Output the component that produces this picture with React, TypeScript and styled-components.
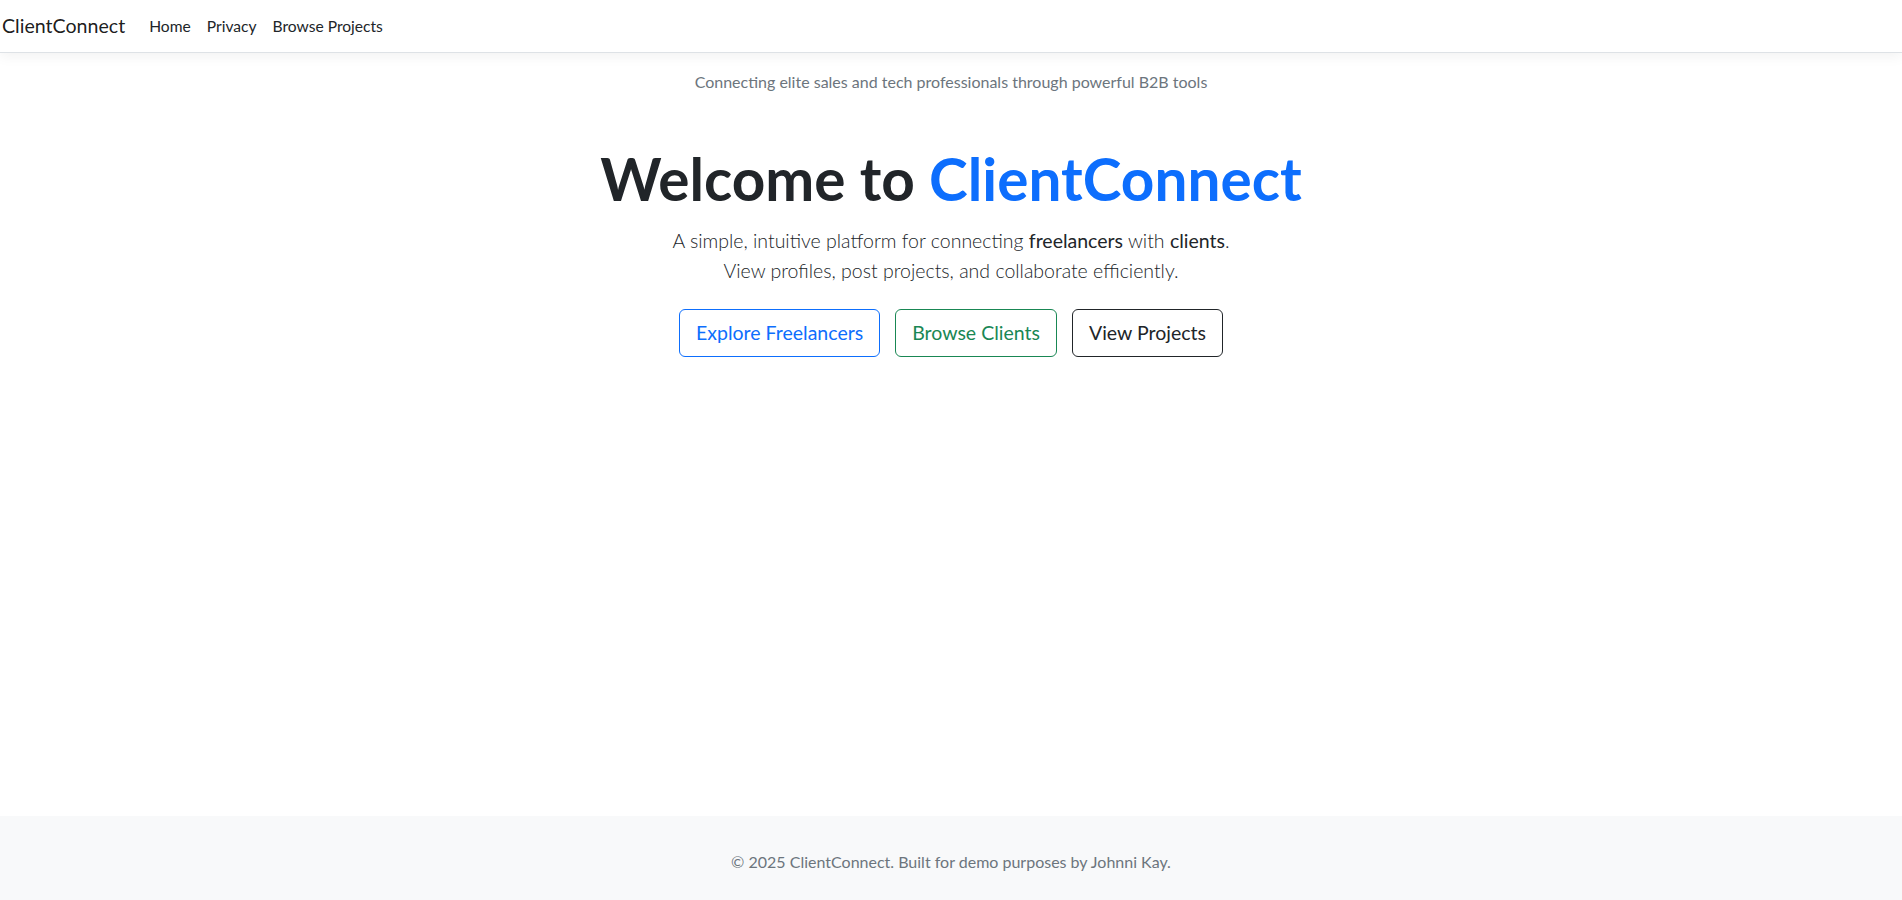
import React from "react";
import styled, { createGlobalStyle } from "styled-components";

const Global = createGlobalStyle`
  * { box-sizing: border-box; }
  html, body { margin: 0; padding: 0; }
  body {
    font-family: "Segoe UI", Lato, "Open Sans", sans-serif;
    font-size: 16px;
    line-height: 1.5;
    color: #212529;
    background: #fff;
  }
`;

const Page = styled.div`
  min-height: 100vh;
  display: flex;
  flex-direction: column;
`;

const Header = styled.header`
  height: 53px;
  display: flex;
  align-items: center;
  padding: 0 2px;
  background: #fff;
  border-bottom: 1px solid #dee2e6;
  box-shadow: 0 0.25rem 0.75rem rgba(0, 0, 0, 0.05);
`;

const Brand = styled.a`
  font-size: 19.6px;
  line-height: 30px;
  color: rgba(0, 0, 0, 0.9);
  margin-right: 16px;
  text-decoration: none;
`;

const NavList = styled.nav`
  display: flex;
`;

const NavLink = styled.a`
  padding: 8px;
  font-size: 15.6px;
  line-height: 24px;
  color: #212529;
  text-decoration: none;
`;

const Main = styled.main`
  flex: 1;
  display: flex;
  flex-direction: column;
  align-items: center;
  padding-top: 17px;
`;

const Tagline = styled.p`
  margin: 0 0 49px;
  font-size: 16px;
  line-height: 24px;
  color: #6c757d;
`;

const Title = styled.h1`
  margin: 0 0 13px;
  font-size: 58.5px;
  line-height: 1.2;
  font-weight: 700;
  color: #212529;
`;

const Accent = styled.span`
  color: #0d6efd;
`;

const Lead = styled.p`
  margin: 0 0 23px;
  font-size: 19.5px;
  line-height: 30px;
  font-weight: 300;
  text-align: center;
  color: #212529;
`;

const Strong = styled.span`
  font-weight: 400;
`;

const Actions = styled.div`
  display: flex;
  gap: 15px;
`;

const Button = styled.a<{ $tone: string }>`
  display: inline-block;
  padding: 8px 16px;
  font-size: 19.5px;
  line-height: 30px;
  border: 1px solid ${(p) => p.$tone};
  color: ${(p) => p.$tone};
  border-radius: 6px;
  text-decoration: none;
  background: transparent;
`;

const Footer = styled.footer`
  height: 84px;
  background: #f8f9fa;
  color: #6c757d;
  text-align: center;
  font-size: 16px;
  line-height: 24px;
  padding-top: 34px;
`;

export default function App() {
  return (
    <Page>
      <Global />
      <Header>
        <Brand href="#">ClientConnect</Brand>
        <NavList>
          <NavLink href="#">Home</NavLink>
          <NavLink href="#">Privacy</NavLink>
          <NavLink href="#">Browse Projects</NavLink>
        </NavList>
      </Header>
      <Main>
        <Tagline>Connecting elite sales and tech professionals through powerful B2B tools</Tagline>
        <Title>
          Welcome to <Accent>ClientConnect</Accent>
        </Title>
        <Lead>
          A simple, intuitive platform for connecting <Strong>freelancers</Strong> with <Strong>clients</Strong>.
          <br />
          View profiles, post projects, and collaborate efficiently.
        </Lead>
        <Actions>
          <Button $tone="#0d6efd" href="#">Explore Freelancers</Button>
          <Button $tone="#198754" href="#">Browse Clients</Button>
          <Button $tone="#212529" href="#">View Projects</Button>
        </Actions>
      </Main>
      <Footer>© 2025 ClientConnect. Built for demo purposes by Johnni Kay.</Footer>
    </Page>
  );
}
